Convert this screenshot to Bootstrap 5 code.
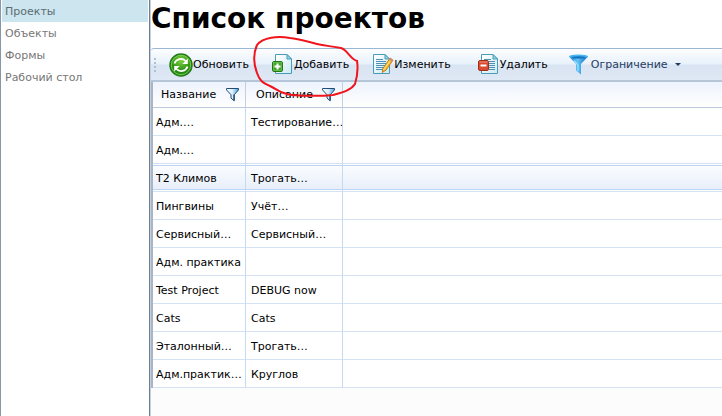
<!DOCTYPE html>
<html lang="ru">
<head>
<meta charset="utf-8">
<meta name="viewport" content="width=device-width, initial-scale=1">
<title>Список проектов</title>
<link href="https://cdn.jsdelivr.net/npm/bootstrap@5.3.0/dist/css/bootstrap.min.css" rel="stylesheet">
<style>
body{font-family:Verdana,"DejaVu Sans",sans-serif;font-size:11px;line-height:16px;color:#000;background:#fff}
.side-menu{width:150px;border-left:1px solid #8796a8;border-right:1px solid #6f7f93;padding:0 1px}
.side-menu .nav-link{color:#777;padding:4px 3px 2px;line-height:16px;border-radius:1px}
.side-menu .nav-link.active{background:#cce5ee;color:#5c6c72}
.content-pane{background:#fcfcfc;border-left:1px solid #c3d0df;min-width:0}
.page-head{background:#fff;height:48px;padding-top:1px}
.page-head h1{font-size:28px;line-height:36px;font-weight:700;margin:0}
.tool-strip{height:34px;border-top:1px solid #9ab8d3;border-bottom:2px solid #b6c6d9;background:linear-gradient(#fcfdff 0,#e8f1fb 48%,#d9e4f2 52%,#dfe8f5 100%);border-radius:3px 0 0 0;gap:21px;padding-left:3px}
.tool-btn{border:0;background:none;padding:0;color:#000;white-space:nowrap}
.tool-btn svg{display:block}
.grip{width:2px;height:14px;background:repeating-linear-gradient(#b1bfd0 0 2px,transparent 2px 4px);margin-right:-8px}
.limit-btn{color:#1f3b60;margin-left:-2px}
.limit-btn .caret-mark{border:3px solid transparent;border-top-color:#1f3b60;border-bottom:0;margin-left:7px}
.grid-table{table-layout:fixed;width:100%;background:#fff;border-left:2px solid #a9b5c5;border-collapse:separate;border-spacing:0}
.grid-table th,.grid-table td{height:28px;padding:2px 2px 0 3px;font-weight:400;white-space:nowrap;border-bottom:1px solid #d5e2f3;border-right:1px solid #c4d9f2;overflow:hidden}
.grid-table th{height:26px;padding:0 6px 0 8px;border-bottom-color:#b9c8da;border-right-color:#c3d0df;background:linear-gradient(#edf3fc,#fff)}
.grid-table th:last-child,.grid-table td:last-child{border-right:0}
.col-name{width:93px}
.col-desc{width:97px}
.grid-table td:nth-child(2){padding-left:5px}
.grid-table th:nth-child(2){padding:0 7px 0 10px}
.grid-table .picked td{background:linear-gradient(#fff 0 1px,#bcd5f4 1px 2px,#fafcff 2px,#e8effa 25px,#bcd5f4 25px 26px,#fff 26px)}
.filter-btn{border:0;background:none;padding:0}
.filter-btn svg{display:block}
.pen-mark{position:absolute;left:252px;top:34px;pointer-events:none}
</style>
<script src="https://cdn.jsdelivr.net/npm/bootstrap@5.3.0/dist/js/bootstrap.bundle.min.js"></script>
</head>
<body>
<svg width="0" height="0" class="position-absolute" aria-hidden="true">
<defs>
<linearGradient id="gFun" x2="1"><stop stop-color="#fff"/><stop offset=".5" stop-color="#d5efff"/><stop offset="1" stop-color="#4aa0dc"/></linearGradient>
<linearGradient id="gBig" x2="1"><stop stop-color="#1c76ca"/><stop offset=".45" stop-color="#62c4f6"/><stop offset="1" stop-color="#1266b4"/></linearGradient>
<radialGradient id="gGreen" cy=".3"><stop stop-color="#7fd23e"/><stop offset="1" stop-color="#258a12"/></radialGradient>
<linearGradient id="gPage" x2="1" y2="1"><stop stop-color="#fff"/><stop offset="1" stop-color="#cdeaf3"/></linearGradient>
<symbol id="funnel" viewBox="0 0 13 14"><path d="M.5.500h12v1.400L8.200 6.800v6L5 10.200V6.800L.5 1.900z" fill="url(#gFun)" stroke="#234c72"/><path d="M8 6.500v6" stroke="#123a66" fill="none"/></symbol>
<symbol id="sheet" viewBox="0 0 17 20"><path d="M.5.5h11.500l4.500 4.500v14.500H.5z" fill="url(#gPage)" stroke="#4a9cb6"/><path d="M12 .5v4.500h4.500z" fill="#9ad5e8" stroke="#4a9cb6"/></symbol>
</defs>
</svg>
<div class="d-flex min-vh-100 position-relative">
<nav class="side-menu flex-shrink-0 nav flex-column flex-nowrap" aria-label="Разделы">
<a class="nav-link active" href="#" aria-current="page">Проекты</a>
<a class="nav-link" href="#">Объекты</a>
<a class="nav-link" href="#">Формы</a>
<a class="nav-link" href="#">Рабочий стол</a>
</nav>
<main class="content-pane flex-grow-1">
<header class="page-head"><h1>Список проектов</h1></header>
<div class="tool-strip d-flex align-items-center" role="toolbar" aria-label="Действия">
<span class="grip"></span>
<button type="button" class="tool-btn d-flex align-items-center"><svg width="24" height="24" viewBox="0 0 24 24"><circle cx="12" cy="12" r="11" fill="url(#gGreen)" stroke="#237d18" stroke-width="1.500"/><circle cx="12" cy="12" r="9.700" fill="none" stroke="#8cd465" stroke-width=".8"/><path d="M5.500 10.500C7 5.500 13.500 4.500 16.500 8M18.500 13.500C17 18.500 10.500 19.500 7.500 16" fill="none" stroke="#fff" stroke-width="1.800"/><path d="M18.800 5.500v5.500h-5.500zM5.200 18.500v-5.500h5.500z" fill="#fff"/></svg>Обновить</button>
<button type="button" class="tool-btn d-flex align-items-center"><svg width="24" height="24" viewBox="0 0 24 24"><use href="#sheet" x="5" y="1" width="17" height="20"/><rect x="2.500" y="8.500" width="10" height="10" rx="1.500" fill="#43a52c" stroke="#247718"/><rect x="3.500" y="9.500" width="8" height="8" fill="none" stroke="#79c95e" stroke-width=".6"/><path d="M7.500 10.500v6M4.500 13.500h6" stroke="#fff" stroke-width="2"/></svg>Добавить</button>
<button type="button" class="tool-btn d-flex align-items-center"><svg width="24" height="24" viewBox="0 0 24 24"><use href="#sheet" x="3" y="1" width="17" height="20"/><path d="M6 6.500h7M6 8.500h10M6 10.500h10M6 12.500h9M6 14.500h8M6 16.500h7" stroke="#4b91b8"/><path d="M20.200 5l2.800 2.200-7 10-3.800 2.300.8-4.300z" fill="#f7b92d" stroke="#ae6f19" stroke-width=".8"/><path d="M20.200 5l2.800 2.200-1.200 1.600-2.800-2.200z" fill="#d9867a"/><path d="M19.500 8.500l-6 8.500" stroke="#ffe78c"/></svg>Изменить</button>
<button type="button" class="tool-btn d-flex align-items-center ms-1"><svg width="24" height="24" viewBox="0 0 24 24"><use href="#sheet" x="5" y="1" width="17" height="20"/><path d="M8 6.500h7M13 8.500h6M13 10.500h6M13 12.500h6M13 14.500h6M13 16.500h6" stroke="#4b91b8"/><rect x="2.500" y="7.500" width="10" height="10" rx="1.500" fill="#d94b30" stroke="#a22e1a"/><path d="M3.500 9h8" stroke="#ef8f76"/><path d="M4.500 12.500h6" stroke="#fff" stroke-width="2"/></svg>Удалить</button>
<button type="button" class="tool-btn limit-btn d-flex align-items-center" aria-haspopup="true"><svg width="24" height="24" viewBox="0 0 24 24"><path d="M2 3.500L9 11v6.500l5 4V11l7-7.500z" fill="url(#gBig)"/><ellipse cx="11.500" cy="3.500" rx="9.500" ry="2" fill="#48b5f0"/><path d="M4 4q7.500-1.500 15 0l-2 1.500H6z" fill="#1572c0"/><path d="M7 7.500l4 4.500v6" stroke="#9be0ff" fill="none" stroke-width="1.200"/></svg>Ограничение<span class="caret-mark"></span></button>
</div>
<table class="grid-table">
<colgroup><col class="col-name"><col class="col-desc"><col></colgroup>
<thead><tr>
<th scope="col"><div class="d-flex justify-content-between align-items-center">Название<button type="button" class="filter-btn" aria-label="Фильтр по названию"><svg width="13" height="14"><use href="#funnel"/></svg></button></div></th>
<th scope="col"><div class="d-flex justify-content-between align-items-center">Описание<button type="button" class="filter-btn" aria-label="Фильтр по описанию"><svg width="13" height="14"><use href="#funnel"/></svg></button></div></th>
<th></th></tr></thead>
<tbody>
<tr><td>Адм.…</td><td>Тестирование…</td><td></td></tr>
<tr><td>Адм.…</td><td></td><td></td></tr>
<tr class="picked"><td>Т2 Климов</td><td>Трогать…</td><td></td></tr>
<tr><td>Пингвины</td><td>Учёт…</td><td></td></tr>
<tr><td>Сервисный…</td><td>Сервисный…</td><td></td></tr>
<tr><td>Адм. практика</td><td></td><td></td></tr>
<tr><td>Test Project</td><td>DEBUG now</td><td></td></tr>
<tr><td>Cats</td><td>Cats</td><td></td></tr>
<tr><td>Эталонный…</td><td>Трогать…</td><td></td></tr>
<tr><td>Адм.практик…</td><td>Круглов</td><td></td></tr>
</tbody>
</table>
</main>
<svg class="pen-mark" width="108" height="64" viewBox="252 34 108 64" aria-hidden="true"><path d="M358 61C351 61 348 50 341 48C331 46 325 46 317 44C306 41 298 39 290 38C278 36 263 37 257 45C253 54 254 65 257 73C260 82 264 83 270 86C280 91 281 94 292 95C306 96 323 96 333 95C344 92 351 90 355 84C358 74 358 67 357 61" fill="none" stroke="#f0141c" stroke-width="2" stroke-linejoin="round"/></svg>
</div>
</body>
</html>
